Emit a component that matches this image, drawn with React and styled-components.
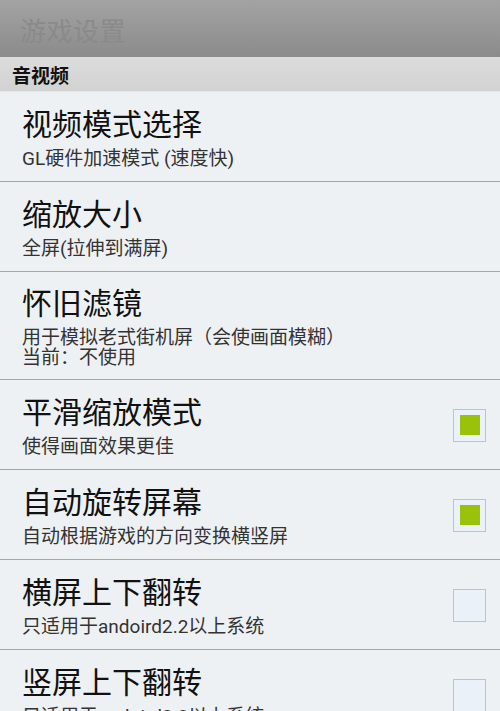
import styled, { createGlobalStyle } from "styled-components";

const GlobalStyle = createGlobalStyle`
  html, body {
    margin: 0;
    padding: 0;
    background: #eef1f4;
    overflow: hidden;
  }
  body {
    font-family: Roboto, "Noto Sans CJK SC", sans-serif;
  }
`;

const Screen = styled.div`
  width: 500px;
  height: 711px;
  overflow: hidden;
  display: flex;
  flex-direction: column;
  background: #eef1f4;
`;

const TitleBar = styled.div`
  height: 57px;
  flex-shrink: 0;
  display: flex;
  align-items: center;
  padding-left: 20px;
  background: linear-gradient(#a3a3a3, #8b8b8b);
  border-bottom: 1px solid #dcdcdc;
`;

const TitleText = styled.div`
  font-size: 26px;
  color: #8a8a8a;
  letter-spacing: 0.5px;
  margin-top: 2px;
`;

const Category = styled.div`
  height: 33px;
  flex-shrink: 0;
  display: flex;
  align-items: center;
  padding-left: 12px;
  background: linear-gradient(#dcdcdc, #d2d2d2);
  border-bottom: 1px solid #e6e6e6;
  font-size: 19px;
  font-weight: bold;
  color: #111;
`;

const Row = styled.div`
  flex-shrink: 0;
  box-sizing: border-box;
  min-height: 90px;
  display: flex;
  align-items: center;
  padding: 14px 14px 11px 22px;
  border-bottom: 1px solid #a4a7aa;
`;

const Texts = styled.div`
  flex: 1;
  display: flex;
  flex-direction: column;
`;

const Title = styled.div`
  font-size: 30px;
  line-height: 36px;
  color: #111;
`;

const Summary = styled.div`
  margin-top: 6px;
  font-size: 19px;
  line-height: 20px;
  color: #333;
  white-space: pre-line;
`;

const Check = styled.div`
  width: 31px;
  height: 31px;
  margin-top: -2px;
  border: 1px solid #b8c4d3;
  background: #eaf1f8;
  display: flex;
  align-items: center;
  justify-content: center;

  &::after {
    content: "";
    width: 20px;
    height: 20px;
    background: ${(p) => (p.$checked ? "#9bc20b" : "transparent")};
  }
`;

const prefs = [
  { title: "视频模式选择", summary: "GL硬件加速模式 (速度快)" },
  { title: "缩放大小", summary: "全屏(拉伸到满屏)" },
  {
    title: "怀旧滤镜",
    summary: "用于模拟老式街机屏（会使画面模糊）\n当前：不使用",
  },
  { title: "平滑缩放模式", summary: "使得画面效果更佳", check: true, checked: true },
  { title: "自动旋转屏幕", summary: "自动根据游戏的方向变换横竖屏", check: true, checked: true },
  { title: "横屏上下翻转", summary: "只适用于andoird2.2以上系统", check: true },
  { title: "竖屏上下翻转", summary: "只适用于andoird2.2以上系统", check: true },
];

export default function App() {
  return (
    <Screen>
      <GlobalStyle />
      <TitleBar>
        <TitleText>游戏设置</TitleText>
      </TitleBar>
      <Category>音视频</Category>
      {prefs.map((p) => (
        <Row key={p.title}>
          <Texts>
            <Title>{p.title}</Title>
            <Summary>{p.summary}</Summary>
          </Texts>
          {p.check && <Check $checked={p.checked} />}
        </Row>
      ))}
    </Screen>
  );
}
